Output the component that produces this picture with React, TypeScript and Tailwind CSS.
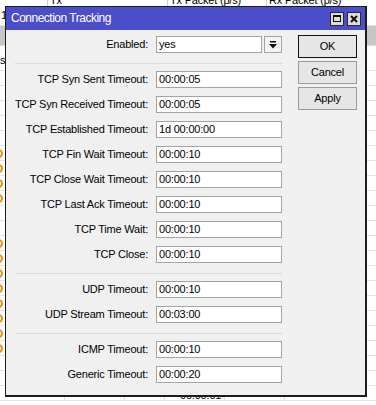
// Connection Tracking dialog (Winbox style) over a table

type Field = { label: string; value: string };

const groups: Field[][] = [
  [
    { label: "TCP Syn Sent Timeout:", value: "00:00:05" },
    { label: "TCP Syn Received Timeout:", value: "00:00:05" },
    { label: "TCP Established Timeout:", value: "1d 00:00:00" },
    { label: "TCP Fin Wait Timeout:", value: "00:00:10" },
    { label: "TCP Close Wait Timeout:", value: "00:00:10" },
    { label: "TCP Last Ack Timeout:", value: "00:00:10" },
    { label: "TCP Time Wait:", value: "00:00:10" },
    { label: "TCP Close:", value: "00:00:10" },
  ],
  [
    { label: "UDP Timeout:", value: "00:00:10" },
    { label: "UDP Stream Timeout:", value: "00:03:00" },
  ],
  [
    { label: "ICMP Timeout:", value: "00:00:10" },
    { label: "Generic Timeout:", value: "00:00:20" },
  ],
];

// rows of the table behind that show an orange icon at the left edge
const iconRows = [5, 6, 7, 8, 11, 12, 13, 14, 15, 16, 17, 18];

function Separator() {
  return <div className="h-[2px] border-b border-[#dadada] translate-y-px" />;
}

function Row({ label, value }: Field) {
  return (
    <div className="flex items-center h-[17px]">
      <div className="w-[133px] text-right whitespace-nowrap">{label}</div>
      <div className="ml-[8px] w-[126px] h-[17px] border border-[#a3a3a3] bg-white pl-[2px] flex items-center">
        {value}
      </div>
    </div>
  );
}

function Button({ text, main }: { text: string; main?: boolean }) {
  return (
    <div
      className={
        main
          ? "h-[23px] w-[59px] border border-[#111] bg-[#e6e6e6] flex items-center justify-center"
          : "h-[23px] w-[59px] border border-[#9a9a9a] bg-[#e6e6e6] flex items-center justify-center"
      }
    >
      {text}
    </div>
  );
}

export default function App() {
  return (
    <div className="relative w-[376px] h-[405px] overflow-hidden bg-white text-black text-[11px] leading-[13px] tracking-[-0.2px] font-['Liberation_Sans',Arial,sans-serif]">
      {/* table behind the dialog */}
      <div className="flex flex-col">
        <div className="h-[8px] flex overflow-hidden">
          <div className="w-[48px] border-r border-[#cfcfcf]" />
          <div className="w-[120px] border-r border-[#cfcfcf] pl-[2px] -mt-[6px]">Tx</div>
          <div className="w-[99px] border-r border-[#cfcfcf] pl-[2px] -mt-[6px]">Tx Packet (p/s)</div>
          <div className="flex-1 pl-[2px] -mt-[6px]">Rx Packet (p/s)</div>
        </div>
        <div className="h-[18px] border-b border-[#e2e2e2] pl-[1px] pt-[1px]">1</div>
        <div className="h-[20px] bg-[#c6c6c6] border-b border-[#dcdcdc]" />
        <div className="h-[25px] border-b border-[#e2e2e2] pt-[8px]">s</div>
        {Array.from({ length: 22 }, (_, k) => (
          <div key={k} className="relative h-[15px] flex border-b border-[#e2e2e2]">
            {iconRows.includes(k) && (
              <div className="absolute left-[-6px] top-[3px] w-[9px] h-[9px] rounded-full border-2 border-[#e8900f]" />
            )}
            <div className="w-[65px] border-r border-[#e2e2e2]" />
            <div className="w-[60px] border-r border-[#e2e2e2]" />
            <div className="w-[40px] border-r border-[#e2e2e2]" />
            <div className="w-[60px] border-r border-[#e2e2e2] pl-[15px] pt-[3px]">
              {k === 21 ? "00:00:01" : ""}
            </div>
            <div className="w-[60px] border-r border-[#e2e2e2]" />
            <div className="flex-1" />
          </div>
        ))}
      </div>

      {/* dialog window */}
      <div className="absolute left-[5px] top-[6px] w-[362px] h-[391px] flex flex-col bg-[#f0f0f0] border-l border-t border-r-2 border-b-2 border-[#1c1c1c]">
        <div className="h-[23px] shrink-0 bg-[#4a4ec8] flex items-center pl-[5px] pr-[4px]">
          <span className="text-white text-[12px] tracking-[-0.5px]">Connection Tracking</span>
          <div className="ml-auto flex gap-[3px]">
            <div className="w-[14px] h-[14px] bg-[#dcdcdc] border border-[#2a2a2a] flex items-center justify-center">
              <div className="w-[8px] h-[7px] border border-t-2 border-[#111]" />
            </div>
            <div className="w-[14px] h-[14px] bg-[#dcdcdc] border border-[#2a2a2a] flex items-center justify-center">
              <svg width="8" height="8" viewBox="0 0 8 8">
                <path d="M1 1 L7 7 M7 1 L1 7" stroke="#111" strokeWidth="2" />
              </svg>
            </div>
          </div>
        </div>

        <div className="flex pt-[5px] pl-[9px]">
          <div className="flex flex-col gap-2 mt-[1px] w-[267px]">
            <div className="flex items-center h-[17px]">
              <div className="w-[133px] text-right">Enabled:</div>
              <div className="ml-[8px] w-[106px] h-[17px] border border-[#a3a3a3] bg-white pl-[2px] flex items-center">
                yes
              </div>
              <div className="ml-[2px] w-[18px] h-[17px] border border-[#a3a3a3] bg-[#f4f4f4] flex items-center justify-center">
                <svg width="8" height="8" viewBox="0 0 8 8">
                  <rect x="1" y="0" width="6" height="1.5" fill="#111" />
                  <polygon points="0,3 8,3 4,7.5" fill="#111" />
                </svg>
              </div>
            </div>
            {groups.map((g, i) => (
              <div key={i} className="contents">
                <Separator />
                {g.map((f) => (
                  <Row key={f.label} {...f} />
                ))}
              </div>
            ))}
          </div>

          <div className="ml-[16px] flex flex-col gap-[3px]">
            <Button text="OK" main />
            <Button text="Cancel" />
            <Button text="Apply" />
          </div>
        </div>
      </div>
    </div>
  );
}
